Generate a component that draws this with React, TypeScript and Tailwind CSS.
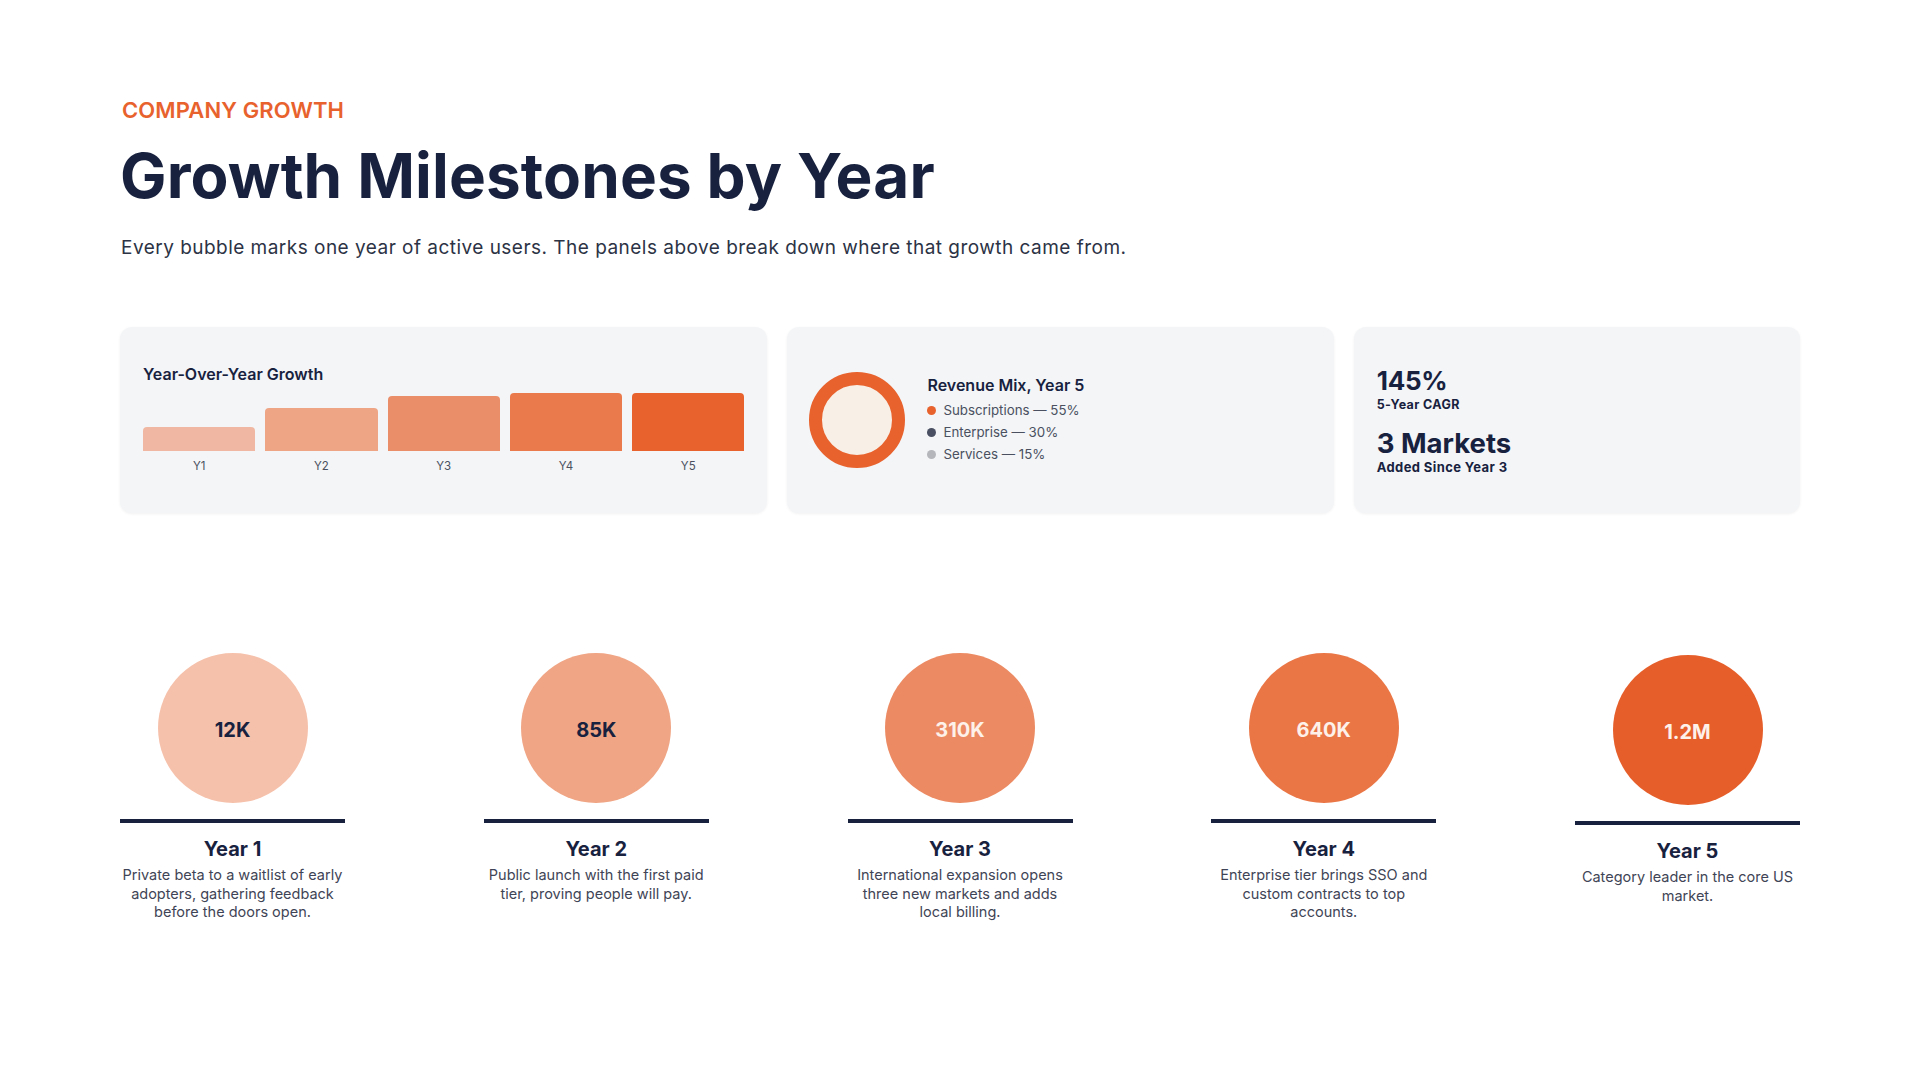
import React from "react";

const bars = [
  { label: "Y1", h: 24, color: "bg-[#f0b8a2]" },
  { label: "Y2", h: 43, color: "bg-[#eda585]" },
  { label: "Y3", h: 55, color: "bg-[#ea8e69]" },
  { label: "Y4", h: 58, color: "bg-[#ea7a4b]" },
  { label: "Y5", h: 58, color: "bg-[#e8622e]" },
];

const milestones = [
  {
    value: "12K",
    year: "Year 1",
    circle: "bg-[#f6c1ab]",
    text: "text-[#18223f]",
    lines: ["Private beta to a waitlist of early", "adopters, gathering feedback", "before the doors open."],
    shift: "",
  },
  {
    value: "85K",
    year: "Year 2",
    circle: "bg-[#f0a584]",
    text: "text-[#18223f]",
    lines: ["Public launch with the first paid", "tier, proving people will pay."],
    shift: "",
  },
  {
    value: "310K",
    year: "Year 3",
    circle: "bg-[#ec8b63]",
    text: "text-[#fdf1ea]",
    lines: ["International expansion opens", "three new markets and adds", "local billing."],
    shift: "",
  },
  {
    value: "640K",
    year: "Year 4",
    circle: "bg-[#ea7646]",
    text: "text-[#fdf1ea]",
    lines: ["Enterprise tier brings SSO and", "custom contracts to top", "accounts."],
    shift: "",
  },
  {
    value: "1.2M",
    year: "Year 5",
    circle: "bg-[#e65f2b]",
    text: "text-[#fdf1ea]",
    lines: ["Category leader in the core US", "market."],
    shift: "mt-[2px]",
  },
];

export default function App() {
  return (
    <div
      className="w-[1920px] h-[1080px] bg-white overflow-hidden px-[120px] pt-[96px]"
      style={{ fontFamily: "Inter, 'Noto Sans', sans-serif" }}
    >
      <div className="pl-[2px] text-[22px] leading-[28px] font-semibold tracking-[0.005em] text-[#e8622e]">
        COMPANY GROWTH
      </div>
      <h1 className="mt-[16px] text-[62px] leading-[72px] font-bold tracking-[0.002em] text-[#18223f]">
        Growth Milestones by Year
      </h1>
      <p className="mt-[22px] pl-[1px] text-[19px] leading-[28px] text-[#2c3345] tracking-[0.025em]">
        Every bubble marks one year of active users. The panels above break down where that growth came from.
      </p>

      {/* Panels */}
      <div className="mt-[65px] grid grid-cols-[647fr_546fr_446fr] gap-[20px] h-[186px]">
        <div className="rounded-[12px] bg-[#f3f5f7] shadow-[0_1px_3px_rgba(16,24,40,0.06)] px-[23px] pb-[4px] flex flex-col justify-center">
          <div className="text-[16px] leading-[20px] font-semibold text-[#18223f]">Year-Over-Year Growth</div>
          <div className="mt-[9px] h-[58px] flex items-end gap-[10px]">
            {bars.map((b) => (
              <div key={b.label} className={`flex-1 rounded-t-[4px] ${b.color}`} style={{ height: b.h }} />
            ))}
          </div>
          <div className="mt-[8px] flex gap-[10px]">
            {bars.map((b) => (
              <div key={b.label} className="flex-1 text-center text-[11.5px] leading-[14px] text-[#4a5060]">
                {b.label}
              </div>
            ))}
          </div>
        </div>

        <div className="rounded-[12px] bg-[#f3f5f7] shadow-[0_1px_3px_rgba(16,24,40,0.06)] px-[22px] flex items-center gap-[22px]">
          <svg width="96" height="96" viewBox="0 0 96 96" className="shrink-0">
            <circle cx="48" cy="48" r="41.5" fill="#f8efe6" stroke="#e8622e" strokeWidth="13" />
          </svg>
          <div className="flex flex-col">
            <div className="text-[16px] leading-[20px] font-semibold text-[#18223f] mb-[5px]">Revenue Mix, Year 5</div>
            <div className="h-[22px] flex items-center gap-[7px] text-[13.3px] text-[#4a5060]">
              <span className="w-[9px] h-[9px] rounded-full bg-[#e8622e]" />
              Subscriptions — 55%
            </div>
            <div className="h-[22px] flex items-center gap-[7px] text-[13.3px] text-[#4a5060]">
              <span className="w-[9px] h-[9px] rounded-full bg-[#4a5062]" />
              Enterprise — 30%
            </div>
            <div className="h-[22px] flex items-center gap-[7px] text-[13.3px] text-[#4a5060]">
              <span className="w-[9px] h-[9px] rounded-full bg-[#b4b6bb]" />
              Services — 15%
            </div>
          </div>
        </div>

        <div className="rounded-[12px] bg-[#f3f5f7] shadow-[0_1px_3px_rgba(16,24,40,0.06)] px-[23px] flex flex-col justify-center text-[#18223f]">
          <div className="text-[26px] leading-[30px] font-bold tracking-[-0.01em]">145%</div>
          <div className="mt-[1px] text-[12.5px] leading-[16px] font-bold tracking-[0.03em]">5-Year CAGR</div>
          <div className="mt-[15px] text-[27.5px] leading-[30px] font-bold">3 Markets</div>
          <div className="mt-[1px] text-[13px] leading-[16px] font-bold tracking-[0.03em]">Added Since Year 3</div>
        </div>
      </div>

      {/* Milestones */}
      <div className="mt-[140px] flex justify-between">
        {milestones.map((m) => (
          <div key={m.year} className={`w-[225px] flex flex-col items-center ${m.shift}`}>
            <div className={`w-[150px] h-[150px] rounded-full flex items-center justify-center pt-[4px] ${m.circle}`}>
              <span className={`text-[20px] font-bold ${m.text}`}>{m.value}</span>
            </div>
            <div className="mt-[16px] w-full h-[4px] bg-[#18223f]" />
            <div className="mt-[13px] text-[20px] leading-[26px] font-bold text-[#18223f]">{m.year}</div>
            <div className="mt-[4px] text-center text-[14.5px] leading-[18.5px] text-[#3f4556]">
              {m.lines.map((l, i) => (
                <div key={i} className="whitespace-nowrap">
                  {l}
                </div>
              ))}
            </div>
          </div>
        ))}
      </div>
    </div>
  );
}
